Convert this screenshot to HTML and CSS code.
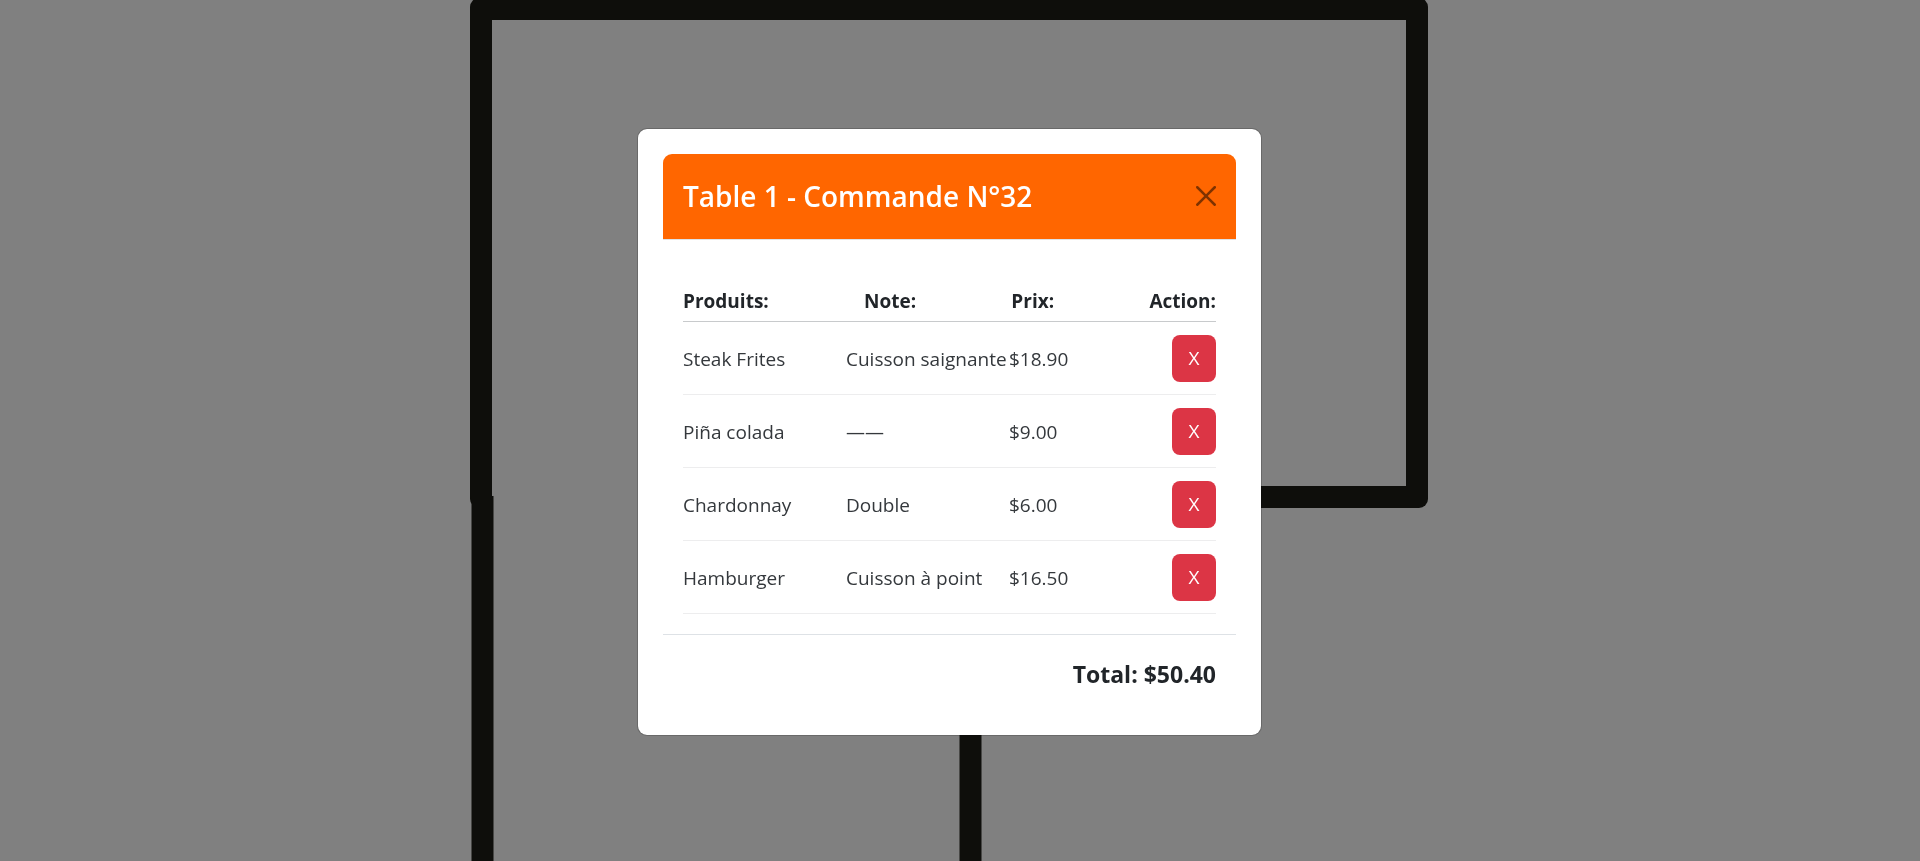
FILE: index.html
```html
<!DOCTYPE html>
<html lang="fr">
<head>
<meta charset="utf-8">
<meta name="viewport" content="width=device-width, initial-scale=1">
<title>Table 1 - Commande N°32</title>
<link rel="stylesheet" href="styles.css">
</head>
<body>
<svg class="floor-plan" viewBox="0 0 1920 861" preserveAspectRatio="xMidYMin slice" aria-hidden="true">
  <rect x="470" y="-2" width="958" height="510" rx="9" class="wall-fill"/>
  <rect x="492" y="20" width="914" height="466" class="room"/>
  <rect x="492" y="480" width="200" height="40" class="room"/>
  <path d="M482.500 496V861M970.500 600V861" class="wall"/>
</svg>
<div class="overlay">
  <section class="modal" role="dialog" aria-modal="true" aria-labelledby="order-title">
    <header class="modal-header">
      <h1 class="modal-title" id="order-title">Table 1 - Commande N°32</h1>
      <button class="close" type="button" aria-label="Fermer">
        <svg viewBox="0 0 16 16" class="close-icon" aria-hidden="true"><path d="M.293.293a1 1 0 0 1 1.414 0L8 6.586 14.293.293a1 1 0 1 1 1.414 1.414L9.414 8l6.293 6.293a1 1 0 0 1-1.414 1.414L8 9.414l-6.293 6.293a1 1 0 0 1-1.414-1.414L6.586 8 .293 1.707a1 1 0 0 1 0-1.414z"/></svg>
      </button>
    </header>
    <div class="modal-body">
      <table class="order">
        <thead>
          <tr class="order-head"><th scope="col">Produits:</th><th scope="col">Note:</th><th scope="col">Prix:</th><th scope="col">Action:</th></tr>
        </thead>
        <tbody>
          <tr class="order-row"><td>Steak Frites</td><td>Cuisson saignante</td><td>$18.90</td><td class="action"><button class="remove" type="button">X</button></td></tr>
          <tr class="order-row"><td>Piña colada</td><td>——</td><td>$9.00</td><td class="action"><button class="remove" type="button">X</button></td></tr>
          <tr class="order-row"><td>Chardonnay</td><td>Double</td><td>$6.00</td><td class="action"><button class="remove" type="button">X</button></td></tr>
          <tr class="order-row"><td>Hamburger</td><td>Cuisson à point</td><td>$16.50</td><td class="action"><button class="remove" type="button">X</button></td></tr>
        </tbody>
      </table>
    </div>
    <footer class="modal-footer">Total: $50.40</footer>
  </section>
</div>
</body>
</html>
```
FILE: styles.css
```css
* { box-sizing: border-box; }
body {
  margin: 0;
  background: #808080;
  color: #212529;
  font-family: "Segoe UI", "Open Sans", "Noto Sans", sans-serif;
  font-size: 19px;
  line-height: 30px;
}
.floor-plan { position: fixed; inset: 0; width: 100%; height: 100%; }
.wall { fill: none; stroke: #0e0e0b; stroke-width: 22; }
.wall-fill { fill: #0e0e0b; }
.room { fill: #808080; }
.overlay {
  position: relative;
  display: flex;
  align-items: center;
  justify-content: center;
  min-height: 100vh;
  padding: 16px 21px 13px 0;
}
.modal {
  width: 100%;
  max-width: 625px;
  padding: 25px;
  background: #fff;
  background-clip: padding-box;
  border: 1px solid rgba(0, 0, 0, .18);
  border-radius: 10px;
}
.modal-header {
  display: flex;
  align-items: center;
  justify-content: space-between;
  padding: 20px;
  background: #f60;
  background-clip: padding-box;
  border-bottom: 1px solid #dee2e6;
  border-radius: 9px 9px 0 0;
}
.modal-title {
  margin: 0;
  color: #fff;
  font-size: 28px;
  font-weight: 600;
  line-height: 45px;
}
.close { display: flex; padding: 0 0 2px; border: 0; background: none; opacity: .5; cursor: pointer; }
.close-icon { width: 20px; height: 20px; }
.modal-body { padding: 46px 20px 20px; }
.order { display: block; }
.order thead, .order tbody { display: block; }
.order-head, .order-row { display: flex; align-items: center; }
.order-head { justify-content: space-between; padding-bottom: 5px; border-bottom: 1px solid #c8cacc; }
th, td { padding: 0; }
th { font-weight: 700; }
.order-row { padding: 13px 0 12px; border-bottom: 1px solid #ededee; }
td { flex: 1 1 0; min-width: 0; color: #34383c; font-weight: 400; white-space: nowrap; }
.action { flex: none; }
.remove {
  display: block;
  width: 44px;
  padding: 8px 0 9px;
  border: 0;
  border-radius: 8px;
  background: #dc3545;
  color: #fff;
  font: inherit;
  font-weight: 500;
  cursor: pointer;
}
.modal-footer {
  padding: 19px 20px 16px;
  border-top: 1px solid #dee2e6;
  font-size: 23px;
  font-weight: 700;
  line-height: 40px;
  text-align: right;
}
```
